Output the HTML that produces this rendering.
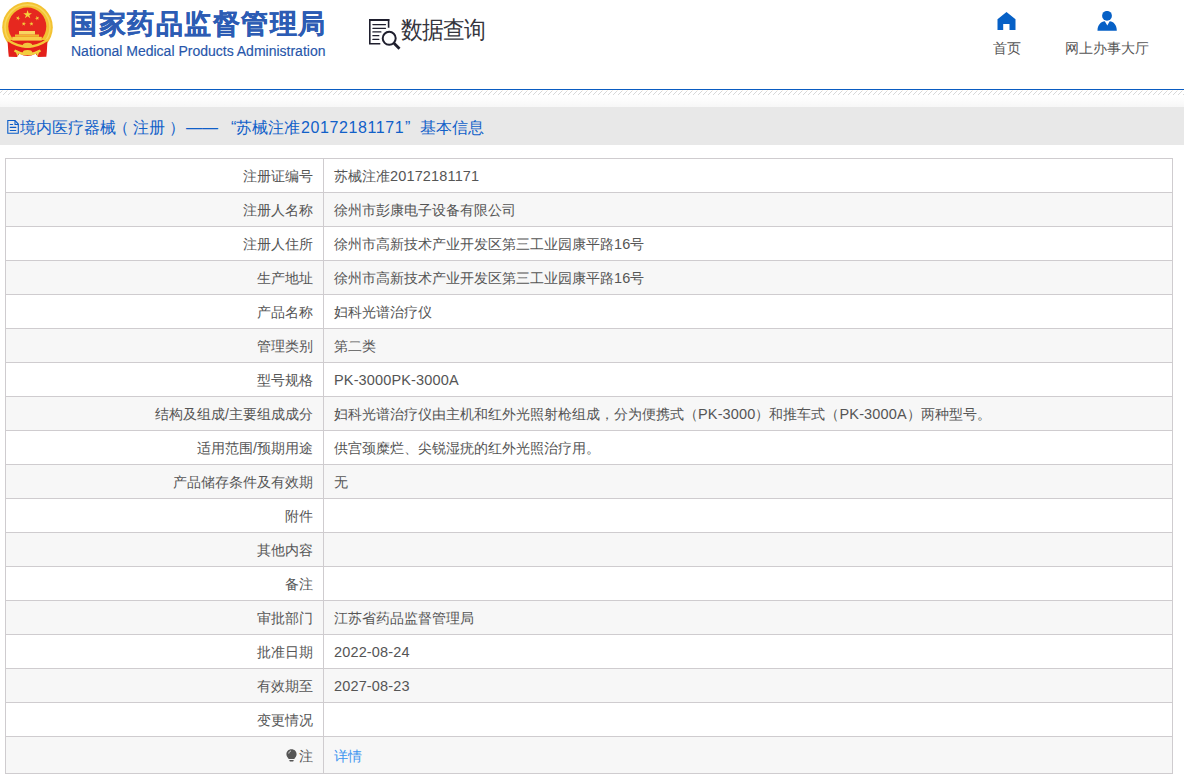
<!DOCTYPE html>
<html><head><meta charset="utf-8">
<style>
*{margin:0;padding:0;box-sizing:border-box}
html,body{width:1184px;height:783px;overflow:hidden;background:#fff;font-family:"Liberation Sans",sans-serif;}
.abs{position:absolute}
.t1{position:absolute;left:70px;top:8px;font-size:27px;font-weight:900;color:#2c5cb4;white-space:nowrap;line-height:32px;letter-spacing:1.5px;-webkit-text-stroke:0.3px #2c5cb4}
.t2{position:absolute;left:71px;top:42.6px;font-size:14px;color:#2756aa;white-space:nowrap;line-height:16px;-webkit-text-stroke:0.15px #2756aa}
.sq{position:absolute;left:401px;top:15.2px;font-size:22px;color:#34343c;line-height:28px;white-space:nowrap;letter-spacing:-1px;transform:scaleY(1.1);transform-origin:0 0}
.nav{position:absolute;top:39px;font-size:14px;color:#555;white-space:nowrap;line-height:18px}
.line{position:absolute;left:0;top:89px;width:1184px;height:1px;background:#0a5cc2}
.grad{position:absolute;left:0;top:95px;width:1184px;height:12px;background:linear-gradient(#fff,#fff 15%,#f7f7f7)}
.bar{position:absolute;left:0;top:107px;width:1184px;height:38px;background:#e8e8e8;font-size:16px;color:#1060c8;line-height:20px;white-space:nowrap}
.bar span{position:absolute;top:11px}
table{position:absolute;left:5px;top:158px;width:1168px;border-collapse:collapse}
td{border:1px solid #cfcccf;height:34px;font-size:14px;color:#555;line-height:18px;padding:0 10px;white-space:nowrap}
td.l{width:318px;text-align:right}
tr:nth-child(even) td{background:#f7f7f7}
tr.last td{height:37px;padding-top:2px}
a{color:#3d95f0;text-decoration:none}
.n{font-size:14.5px;letter-spacing:0.15px;line-height:18px}
</style></head><body>
<svg class="abs" style="left:0;top:0" width="56" height="60" viewBox="0 0 56 60">
  <circle cx="27.5" cy="27.3" r="25.3" fill="#f3c232"/>
  <circle cx="27.5" cy="27.3" r="22.5" fill="none" stroke="#f8d65a" stroke-width="1.5"/>
  <circle cx="27.3" cy="26.5" r="19" fill="#e6281f"/>
  <path d="M7.5 40 L8.3 52 L8.8 56.8 L17 57 L19.5 53.5 Q27.5 58.5 35.5 53.5 L38 57 L46.3 56.8 L46.8 52 L47.5 40 Z" fill="#e3201a"/>
  <path d="M7 39.5 Q27.5 54 48 39.5" fill="none" stroke="#f5c838" stroke-width="2.4"/>
  <ellipse cx="27.5" cy="45.3" rx="4.8" ry="2.6" fill="#f2c53e"/>
  <path d="M14.5 50.5 Q27.5 58 40.5 50.5" fill="none" stroke="#f3d040" stroke-width="2.2"/>
  <ellipse cx="27.5" cy="52.3" rx="4.6" ry="2.4" fill="#f3cd3e"/>
  <path d="M15 50 L19 51.5 L17.5 56.5 Z M40 50 L36 51.5 L37.5 56.5 Z" fill="#f0d040"/>
  <rect x="12.3" y="36.8" width="29.5" height="3.8" fill="#f7cd48"/>
  <rect x="15" y="34.5" width="24" height="2.3" fill="#f2b830"/>
  <rect x="19" y="31" width="16" height="3.5" fill="#f9d561"/>
  <path d="M27.60 10.00 L28.63 13.18 L31.97 13.18 L29.27 15.14 L30.30 18.32 L27.60 16.36 L24.90 18.32 L25.93 15.14 L23.23 13.18 L26.57 13.18 Z" fill="#f6d33e"/>
  <path d="M18.79 16.04 L18.73 17.71 L20.30 18.28 L18.69 18.74 L18.63 20.41 L17.70 19.03 L16.09 19.49 L17.12 18.17 L16.19 16.78 L17.76 17.36 Z M36.41 16.04 L37.44 17.36 L39.01 16.78 L38.08 18.17 L39.11 19.49 L37.50 19.03 L36.57 20.41 L36.51 18.74 L34.90 18.28 L36.47 17.71 Z M24.20 21.53 L24.43 23.19 L26.08 23.48 L24.58 24.21 L24.81 25.87 L23.65 24.67 L22.15 25.40 L22.93 23.92 L21.77 22.72 L23.41 23.01 Z M31.00 21.53 L31.79 23.01 L33.43 22.72 L32.27 23.92 L33.05 25.40 L31.55 24.67 L30.39 25.87 L30.62 24.21 L29.12 23.48 L30.77 23.19 Z" fill="#f3cf3c"/>
</svg>
<div class="t1">国家药品监督管理局</div>
<div class="t2">National Medical Products Administration</div>
<svg class="abs" style="left:364px;top:14px" width="40" height="40" viewBox="0 0 40 40">
  <path d="M16.3 29.8 H5.8 V5.9 H24.6 V13.8" fill="none" stroke="#1f1f2e" stroke-width="1.6"/>
  <path d="M5 6 H25.3" stroke="#1f1f2e" stroke-width="1.9"/>
  <path d="M8.9 10.6 H21.5 M8.9 14.3 H21.5 M8.9 17.9 H16.9 M8.9 21.7 H14.8 M8.9 25.4 H14.8" stroke="#1f1f2e" stroke-width="1.3" stroke-linecap="round"/>
  <circle cx="25.2" cy="24.3" r="6.5" fill="none" stroke="#1f1f2e" stroke-width="2"/>
  <path d="M29.8 29 L35.5 34.8" stroke="#1f1f2e" stroke-width="2.8"/>
</svg>
<div class="sq">数据查询</div>
<svg class="abs" style="left:997px;top:12px" width="19" height="19" viewBox="0 0 19 19"><path d="M9.5 0 L18.5 7.3 V18 H12.5 V11.9 H6.2 V18 H0.5 V7.3 Z" fill="#0660c6"/></svg>
<div class="nav" style="left:993px">首页</div>
<svg class="abs" style="left:1097px;top:11px" width="21" height="21" viewBox="0 0 21 21"><circle cx="10" cy="4.8" r="4.9" fill="#0660c6"/><path d="M0.5 19.7 C0.5 14 4 10.6 7.8 10.3 L10.3 14.5 L12.7 10.3 C16.5 10.6 19.8 14 19.8 19.7 Z" fill="#0660c6"/></svg>
<div class="nav" style="left:1065px">网上办事大厅</div>
<div class="line"></div>
<svg class="abs" style="left:0;top:90px" width="1184" height="5">
  <defs><pattern id="h" x="0" y="0" width="5" height="5" patternUnits="userSpaceOnUse">
    <rect x="2" y="0" width="1" height="1" fill="#f6eee2"/>
    <rect x="1" y="1" width="1" height="1" fill="#d8d8d8"/>
    <rect x="0" y="2" width="1" height="1" fill="#d8d8d8"/>
    <rect x="4" y="3" width="1" height="1" fill="#d8d8d8"/>
    <rect x="3" y="4" width="1" height="1" fill="#d8d8d8"/>
  </pattern></defs>
  <rect width="1184" height="5" fill="url(#h)" shape-rendering="crispEdges"/>
</svg>
<div class="grad"></div>
<div class="bar">
  <svg class="abs" style="left:6px;top:12px" width="15" height="16" viewBox="0 0 15 16"><path d="M1.8 1.5 H9 L12.3 5 V14.2 H1.8 Z" fill="none" stroke="#0a5cc8" stroke-width="1.1"/><path d="M9 1.5 V5.5 H12.3" fill="none" stroke="#0a5cc8" stroke-width="1.1"/><path d="M4.3 5.5 H6.6 M4.3 8.4 H9.8 M4.3 11.5 H9.8" stroke="#0a5cc8" stroke-width="1.2" stroke-linecap="round"/></svg>
  <span style="left:20px">境内医疗器械</span>
  <span style="left:113px">（</span>
  <span style="left:133px">注册</span>
  <span style="left:169px">）</span>
  <span style="left:186px;letter-spacing:0">——</span>
  <span style="left:231px">“</span>
  <span style="left:236px">苏械注准</span>
  <span style="left:301px;letter-spacing:0.6px">20172181171</span>
  <span style="left:405px">”</span>
  <span style="left:420px">基本信息</span>
</div>
<table>
<tr><td class="l">注册证编号</td><td>苏械注准<span class="n">20172181171</span></td></tr>
<tr><td class="l">注册人名称</td><td>徐州市彭康电子设备有限公司</td></tr>
<tr><td class="l">注册人住所</td><td>徐州市高新技术产业开发区第三工业园康平路<span class="n">16</span>号</td></tr>
<tr><td class="l">生产地址</td><td>徐州市高新技术产业开发区第三工业园康平路<span class="n">16</span>号</td></tr>
<tr><td class="l">产品名称</td><td>妇科光谱治疗仪</td></tr>
<tr><td class="l">管理类别</td><td>第二类</td></tr>
<tr><td class="l">型号规格</td><td><span class="n">PK-3000PK-3000A</span></td></tr>
<tr><td class="l">结构及组成/主要组成成分</td><td>妇科光谱治疗仪由主机和红外光照射枪组成，分为便携式（<span class="n">PK-3000</span>）和推车式（<span class="n">PK-3000A</span>）两种型号。</td></tr>
<tr><td class="l">适用范围/预期用途</td><td>供宫颈糜烂、尖锐湿疣的红外光照治疗用。</td></tr>
<tr><td class="l">产品储存条件及有效期</td><td>无</td></tr>
<tr><td class="l">附件</td><td></td></tr>
<tr><td class="l">其他内容</td><td></td></tr>
<tr><td class="l">备注</td><td></td></tr>
<tr><td class="l">审批部门</td><td>江苏省药品监督管理局</td></tr>
<tr><td class="l">批准日期</td><td><span class="n">2022-08-24</span></td></tr>
<tr><td class="l">有效期至</td><td><span class="n">2027-08-23</span></td></tr>
<tr><td class="l">变更情况</td><td></td></tr>
<tr class="last"><td class="l"><svg width="11" height="13" viewBox="0 0 11 13" style="vertical-align:-1px;margin-right:2px"><path d="M5.5 0.3 C8.6 0.3 10.6 2.6 10.6 5.2 C10.6 7.4 9 8.5 8.3 10 H2.7 C2 8.5 0.4 7.4 0.4 5.2 C0.4 2.6 2.4 0.3 5.5 0.3 Z" fill="#555"/><path d="M3.2 11 H7.8 L7.2 12.6 H3.8 Z" fill="#555"/><path d="M2.8 4.5 C3 3 4 2.2 5 2" stroke="#eee" stroke-width="0.9" fill="none"/></svg>注</td><td><a>详情</a></td></tr>
</table>
</body></html>
